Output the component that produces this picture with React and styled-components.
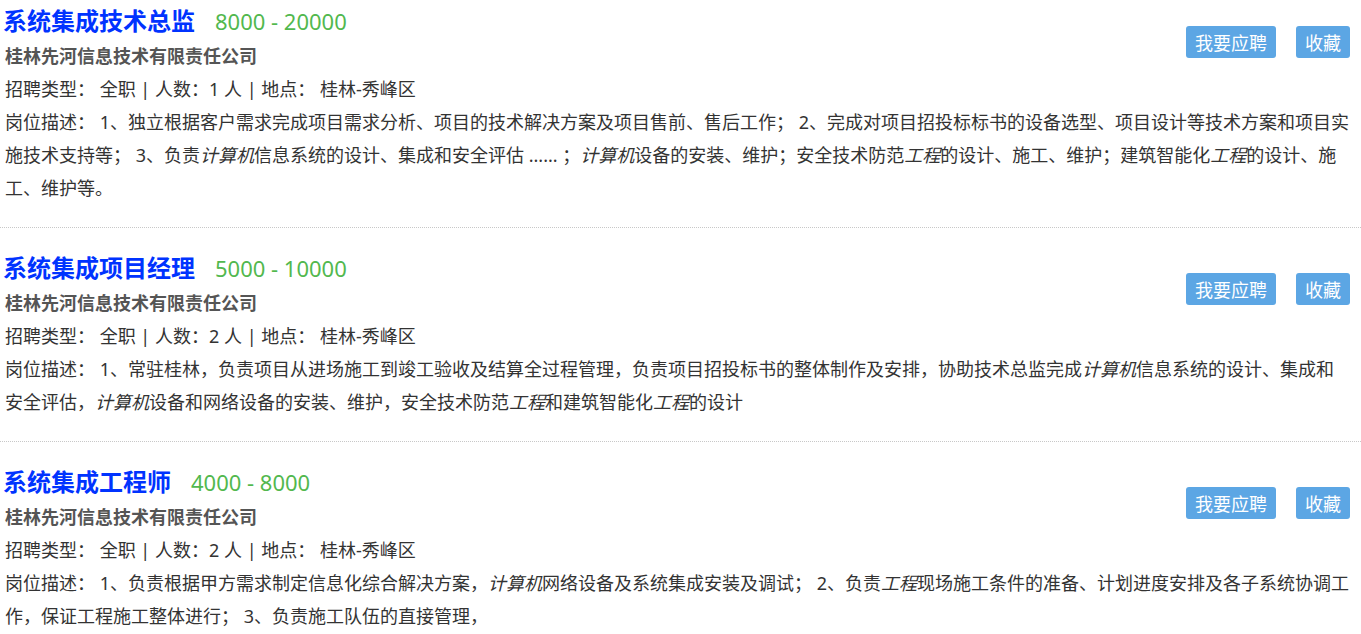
import styled, { createGlobalStyle } from 'styled-components';

const GlobalStyle = createGlobalStyle`
    body {
        margin: 0;
        background: #fff;
        font-family: "Noto Sans", "Noto Sans CJK SC", sans-serif;
        color: #333;
    }
`

const JobList = styled.ul`
    list-style: none;
    margin: 0;
    padding: 0;
`

const JobItem = styled.li`
    padding: 21px 11px 22px 5px;
    border-bottom: 1px dotted #c8c8c8;

    &:first-child {
        padding-top: 2px;
    }
`

const Actions = styled.div`
    float: right;
    display: flex;
    gap: 20px;
    margin-top: 24px;
`

const ActionBtn = styled.button`
    height: 32px;
    padding: 0 9px;
    border: none;
    border-radius: 3px;
    background-color: #5ca6e4;
    color: #fff;
    font-family: "Noto Sans CJK SC", sans-serif;
    font-size: 18px;
    line-height: 32px;
    cursor: pointer;
`

const TitleRow = styled.div`
    display: flex;
    align-items: baseline;
    gap: 20px;
    height: 38px;
    line-height: 38px;
`

const JobTitle = styled.a`
    margin-left: -2px;
    color: #0033ff;
    font-size: 24px;
    font-weight: bold;
    text-decoration: none;
`

const Salary = styled.span`
    color: #52b84e;
    font-size: 22px;
`

const Company = styled.div`
    color: #555;
    font-size: 18px;
    font-weight: bold;
    line-height: 33px;
`

const Line = styled.p`
    margin: 0;
    font-size: 18px;
    line-height: 33px;

    em {
        font-style: italic;
    }
`

const jobs = [
    {
        title: '系统集成技术总监',
        salary: '8000 - 20000',
        count: 1,
        desc: <>1、独立根据客户需求完成项目需求分析、项目的技术解决方案及项目售前、售后工作； 2、完成对项目招投标标书的设备选型、项目设计等技术方案和项目实施技术支持等； 3、负责<em>计算机</em>信息系统的设计、集成和安全评估 ...... ；<em>计算机</em>设备的安装、维护；安全技术防范<em>工程</em>的设计、施工、维护；建筑智能化<em>工程</em>的设计、施工、维护等。</>,
    },
    {
        title: '系统集成项目经理',
        salary: '5000 - 10000',
        count: 2,
        desc: <>1、常驻桂林，负责项目从进场施工到竣工验收及结算全过程管理，负责项目招投标书的整体制作及安排，协助技术总监完成<em>计算机</em>信息系统的设计、集成和安全评估，<em>计算机</em>设备和网络设备的安装、维护，安全技术防范<em>工程</em>和建筑智能化<em>工程</em>的设计</>,
    },
    {
        title: '系统集成工程师',
        salary: '4000 - 8000',
        count: 2,
        desc: <>1、负责根据甲方需求制定信息化综合解决方案，<em>计算机</em>网络设备及系统集成安装及调试； 2、负责<em>工程</em>现场施工条件的准备、计划进度安排及各子系统协调工作，保证工程施工整体进行； 3、负责施工队伍的直接管理，</>,
    },
];

export default function App() {
    return (
        <>
            <GlobalStyle />
            <JobList>
                {
                    jobs.map((job, index) =>
                        <JobItem key={'job' + index}>
                            <Actions>
                                <ActionBtn>我要应聘</ActionBtn>
                                <ActionBtn>收藏</ActionBtn>
                            </Actions>
                            <TitleRow>
                                <JobTitle href="#">{job.title}</JobTitle>
                                <Salary>{job.salary}</Salary>
                            </TitleRow>
                            <Company>桂林先河信息技术有限责任公司</Company>
                            <Line>招聘类型： 全职 | 人数：{job.count} 人 | 地点： 桂林-秀峰区</Line>
                            <Line>岗位描述： {job.desc}</Line>
                        </JobItem>
                    )
                }
            </JobList>
        </>
    );
}
